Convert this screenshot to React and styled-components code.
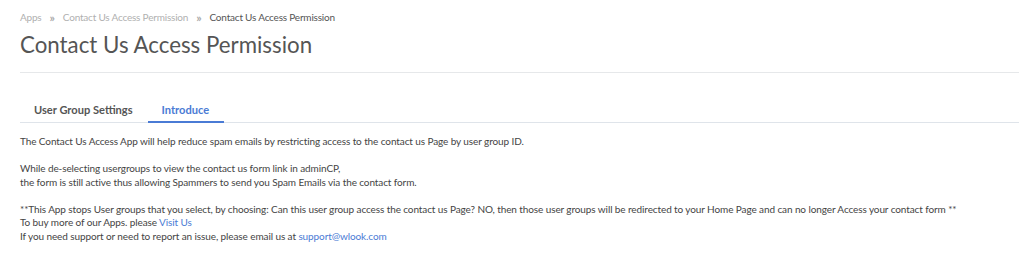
import React, { useState } from "react";
import styled, { createGlobalStyle } from "styled-components";

const GlobalStyle = createGlobalStyle`
  body {
    margin: 0;
    background: #fff;
    font-family: Lato, "Open Sans", sans-serif;
    color: #444;
  }
`;

const Page = styled.div`
  padding: 8px 5px 0 20px;
`;

const Crumbs = styled.div`
  display: flex;
  align-items: center;
  gap: 8px;
  font-size: 10px;
  letter-spacing: -0.2px;
  height: 18px;
  color: #b0b0b0;
`;

const Crumb = styled.span`
  color: ${(p) => (p.current ? "#555" : "#b0b0b0")};
`;

const Sep = styled.span`
  font-size: 12px;
  font-weight: 700;
  color: #aaa;
`;

const Title = styled.h1`
  margin: 5px 0 0;
  font-size: 22.3px;
  font-weight: 400;
  color: #555;
  padding-bottom: 14px;
  border-bottom: 1px solid #e6e8ea;
`;

const Tabs = styled.div`
  display: flex;
  margin-top: 30px;
  border-bottom: 1px solid #dfe4ea;
`;

const Tab = styled.div`
  padding: 0 15px 5px 14px;
  font-size: 11.1px;
  font-weight: 700;
  color: ${(p) => (p.active ? "#4a7bd5" : "#555")};
  border-bottom: 2px solid ${(p) => (p.active ? "#4a7bd5" : "transparent")};
  margin-bottom: -1px;
  cursor: pointer;
`;

const Body = styled.div`
  padding-top: 12px;
  font-size: 10px;
  letter-spacing: -0.1px;
  line-height: 13.5px;
  color: #444;
`;

const Para = styled.p`
  margin: 0 0 13.5px;
`;

const Link = styled.a`
  color: #4a7bd5;
  text-decoration: none;
`;

export default function App() {
  const [tab, setTab] = useState(1);
  return (
    <Page>
      <GlobalStyle />
      <Crumbs>
        <Crumb>Apps</Crumb>
        <Sep>»</Sep>
        <Crumb>Contact Us Access Permission</Crumb>
        <Sep>»</Sep>
        <Crumb current>Contact Us Access Permission</Crumb>
      </Crumbs>
      <Title>Contact Us Access Permission</Title>
      <Tabs>
        <Tab active={tab === 0} onClick={() => setTab(0)}>
          User Group Settings
        </Tab>
        <Tab active={tab === 1} onClick={() => setTab(1)}>
          Introduce
        </Tab>
      </Tabs>
      <Body>
        <Para>
          The Contact Us Access App will help reduce spam emails by restricting access to the contact us Page by user
          group ID.
        </Para>
        <Para>
          While de-selecting usergroups to view the contact us form link in adminCP,
          <br />
          the form is still active thus allowing Spammers to send you Spam Emails via the contact form.
        </Para>
        <Para>
          **This App stops User groups that you select, by choosing: Can this user group access the contact us Page? NO,
          then those user groups will be redirected to your Home Page and can no longer Access your contact form **
          <br />
          To buy more of our Apps. please <Link href="#">Visit Us</Link>
          <br />
          If you need support or need to report an issue, please email us at{" "}
          <Link href="#">support@wlook.com</Link>
        </Para>
      </Body>
    </Page>
  );
}
